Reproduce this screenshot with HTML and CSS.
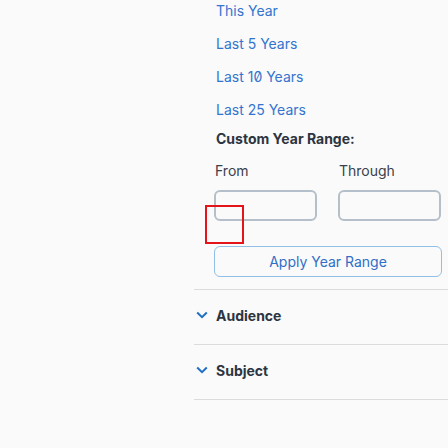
FILE: index.html
```html
<!DOCTYPE html>
<html lang="en">
<head>
<meta charset="utf-8">
<title>Filters</title>
<link rel="stylesheet" href="styles.css">
</head>
<body>
<div class="panel">
  <section class="year">
    <ul class="quick">
      <li><a href="#">This Year</a></li>
      <li><a href="#">Last 5 Years</a></li>
      <li><a href="#">Last 10 Years</a></li>
      <li><a href="#">Last 25 Years</a></li>
    </ul>
    <h4 class="custom-title">Custom Year Range:</h4>
    <div class="range">
      <label class="field"><span class="field-label">From</span><input class="field-input" type="text"></label>
      <label class="field"><span class="field-label">Through</span><input class="field-input" type="text"></label>
    </div>
    <button class="apply" type="button">Apply Year Range</button>
    <div class="marker"></div>
  </section>
  <div class="facet">
    <svg class="chev" width="12" height="8" viewBox="0 0 12 8"><path d="M1.2 1.5 L6 6.2 L10.8 1.5" fill="none" stroke="#1f6fc5" stroke-width="2"/></svg>
    <span class="facet-title">Audience</span>
  </div>
  <div class="facet last">
    <svg class="chev" width="12" height="8" viewBox="0 0 12 8"><path d="M1.2 1.5 L6 6.2 L10.8 1.5" fill="none" stroke="#1f6fc5" stroke-width="2"/></svg>
    <span class="facet-title">Subject</span>
  </div>
</div>
</body>
</html>
```

FILE: styles.css
```css
html, body {
  margin: 0;
  padding: 0;
  background: #fafafa;
  font-family: Inter, "Liberation Sans", sans-serif;
  font-size: 14px;
  overflow: hidden;
}
.panel {
  margin-left: 194px;
  width: 254px;
}
.year {
  display: flow-root;
  position: relative;
  padding: 0 6px 12px 20px;
}
.quick {
  list-style: none;
  margin: -6px 0 0;
  padding: 0;
}
.quick li {
  line-height: 33px;
  height: 33px;
}
.quick a {
  color: #3474cf;
  text-decoration: none;
  font-feature-settings: "zero" 1;
  padding-left: 2px;
}
.custom-title {
  margin: 3px 0 0;
  padding-left: 2px;
  line-height: 20px;
  font-size: 14px;
  font-weight: 700;
  color: #2d3441;
}
.range {
  display: flex;
  gap: 21px;
  margin-top: 12px;
}
.field {
  display: flex;
  flex-direction: column;
  gap: 9px;
  width: 103px;
}
.field-label {
  line-height: 20px;
  color: #3b404b;
  padding-left: 1px;
}
.field-input {
  box-sizing: border-box;
  width: 103px;
  height: 31px;
  margin: 0;
  border: 2px solid #b5bfca;
  border-radius: 6px;
  background: #fafafa;
  font: inherit;
}
.apply {
  display: block;
  box-sizing: border-box;
  width: 228px;
  height: 31px;
  margin-top: 25px;
  border: 1px solid #92bfe8;
  border-radius: 6px;
  background: #fafafa;
  color: #2f6fc7;
  font: inherit;
  font-size: 14px;
}
.marker {
  position: absolute;
  left: 11px;
  top: 205px;
  width: 35px;
  height: 35px;
  border: 2px solid #e5141b;
}
.facet {
  box-sizing: border-box;
  height: 55px;
  padding: 0 0 4px 2px;
  border-top: 1px solid #dcdcdc;
  display: flex;
  align-items: center;
}
.facet.last {
  height: 56px;
  border-bottom: 1px solid #dcdcdc;
}
.chev {
  margin-right: 8px;
}
.facet-title {
  font-weight: 700;
  color: #2d3441;
}
```
